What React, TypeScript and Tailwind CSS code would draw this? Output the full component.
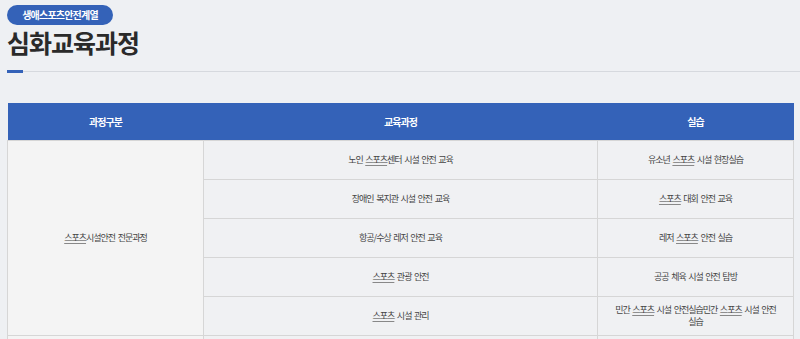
import React from "react";

const font = { fontFamily: '"Noto Sans CJK KR", "Noto Sans", sans-serif' };

function Sports({ text }: { text: string }) {
  // underline every "스포츠" like the source page
  const parts = text.split("스포츠");
  return (
    <>
      {parts.map((p, i) => (
        <React.Fragment key={i}>
          {p}
          {i < parts.length - 1 && <span className="underline underline-offset-2 decoration-[#888]">스포츠</span>}
        </React.Fragment>
      ))}
    </>
  );
}

const rows = [
  ["노인 스포츠센터 시설 안전 교육", "유소년 스포츠 시설 현장실습"],
  ["장애인 복지관 시설 안전 교육", "스포츠 대회 안전 교육"],
  ["항공/수상 레저 안전 교육", "레저 스포츠 안전 실습"],
  ["스포츠 관광 안전", "공공 체육 시설 안전 탐방"],
  ["스포츠 시설 관리", "민간 스포츠 시설 안전실습민간 스포츠 시설 안전 실습"],
];

export default function App() {
  return (
    <div className="h-[339px] w-[800px] overflow-hidden bg-[#eef0f3] pt-[5px]" style={font}>
      <div className="flex flex-col items-start pl-[7px]">
        <span className="flex h-[20px] w-[106px] items-center justify-center rounded-full bg-[#3462b8] text-[10px] font-bold leading-none tracking-[-0.8px] text-white">
          생애스포츠안전계열
        </span>
        <h1 className="mt-[1px] text-[25px] font-bold leading-[32px] tracking-[-1px] text-[#2a2a2a]">
          심화교육과정
        </h1>
      </div>

      <div className="mt-[12px] flex items-end">
        <div className="ml-[7px] h-[3px] w-[16px] bg-[#3462b8]" />
        <div className="mb-px h-px flex-1 bg-[#d6d9de]" />
      </div>

      <table className="ml-[7px] mt-[30px] w-[786px] table-fixed border-collapse text-center">
        <colgroup>
          <col className="w-[196px]" />
          <col className="w-[394px]" />
          <col className="w-[196px]" />
        </colgroup>
        <thead>
          <tr className="h-[37px] bg-[#3462b8] text-[10px] font-bold tracking-[-1px] text-white">
            <th>과정구분</th>
            <th>교육과정</th>
            <th>실습</th>
          </tr>
        </thead>
        <tbody className="break-keep text-[9px] tracking-[-1px] [word-spacing:1.5px] text-[#444]">
          {rows.map((r, i) => (
            <tr key={i} className="h-[39px]">
              {i === 0 && (
                <td rowSpan={5} className="border border-[#d6d6d6] bg-[#f4f4f4]">
                  <Sports text="스포츠시설안전 전문과정" />
                </td>
              )}
              <td className="border border-[#d6d6d6] bg-[#f0f1f3] px-[10px]">
                <Sports text={r[0]} />
              </td>
              <td className="border border-[#d6d6d6] bg-[#f0f1f3] px-[11px] leading-[12px]">
                <Sports text={r[1]} />
              </td>
            </tr>
          ))}
          <tr className="h-[10px]">
            <td className="border border-[#d6d6d6] bg-[#f4f4f4]" />
            <td className="border border-[#d6d6d6] bg-[#f0f1f3]" />
            <td className="border border-[#d6d6d6] bg-[#f0f1f3]" />
          </tr>
        </tbody>
      </table>
    </div>
  );
}
